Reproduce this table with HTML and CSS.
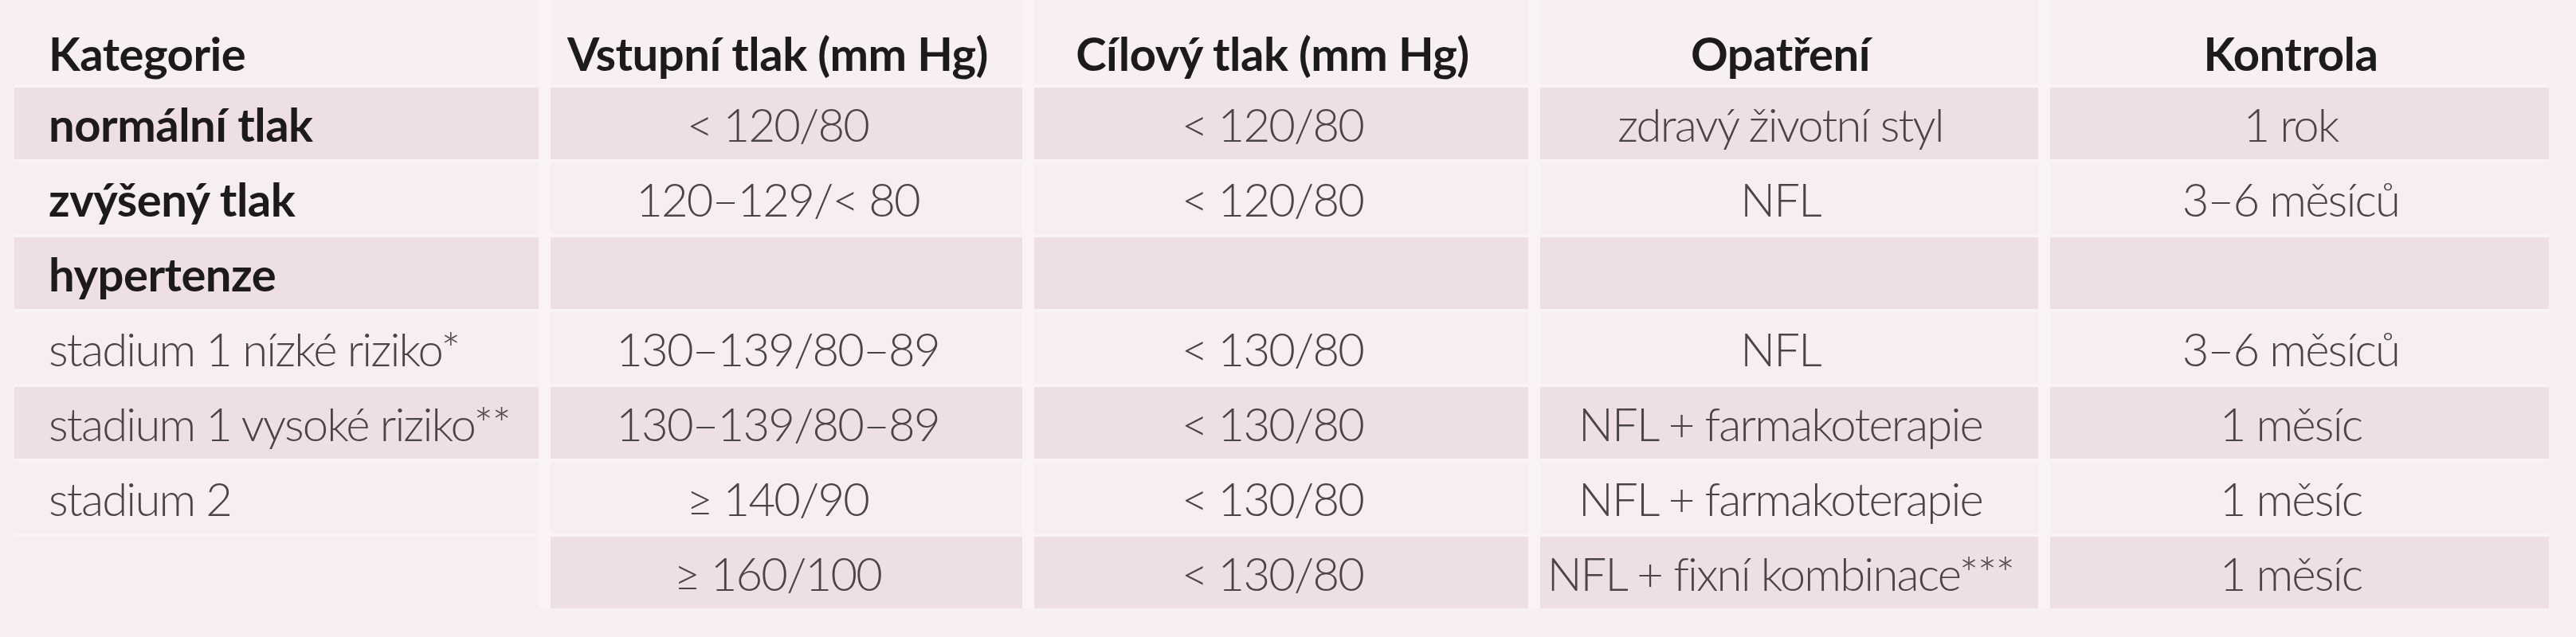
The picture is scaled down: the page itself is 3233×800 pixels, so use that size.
FILE: index.html
```html
<!DOCTYPE html>
<html lang="cs">
<head>
<meta charset="utf-8">
<title>Kategorie krevního tlaku</title>
<link rel="stylesheet" href="styles.css">
</head>
<body>
<div class="page">
  <div class="grid">
    <div class="cell head left">Kategorie</div>
    <div class="cell head">Vstupní tlak (mm Hg)</div>
    <div class="cell head">Cílový tlak (mm Hg)</div>
    <div class="cell head">Opatření</div>
    <div class="cell head">Kontrola</div>

    <div class="cell shade left strong">normální tlak</div>
    <div class="cell shade">&lt; 120/80</div>
    <div class="cell shade">&lt; 120/80</div>
    <div class="cell shade">zdravý životní styl</div>
    <div class="cell shade">1 rok</div>

    <div class="cell left strong">zvýšený tlak</div>
    <div class="cell">120–129/&lt; 80</div>
    <div class="cell">&lt; 120/80</div>
    <div class="cell">NFL</div>
    <div class="cell">3–6 měsíců</div>

    <div class="cell shade left strong">hypertenze</div>
    <div class="cell shade"></div>
    <div class="cell shade"></div>
    <div class="cell shade"></div>
    <div class="cell shade"></div>

    <div class="cell left">stadium 1 nízké riziko*</div>
    <div class="cell">130–139/80–89</div>
    <div class="cell">&lt; 130/80</div>
    <div class="cell">NFL</div>
    <div class="cell">3–6 měsíců</div>

    <div class="cell shade left">stadium 1 vysoké riziko**</div>
    <div class="cell shade">130–139/80–89</div>
    <div class="cell shade">&lt; 130/80</div>
    <div class="cell shade">NFL + farmakoterapie</div>
    <div class="cell shade">1 měsíc</div>

    <div class="cell left">stadium 2</div>
    <div class="cell">≥ 140/90</div>
    <div class="cell">&lt; 130/80</div>
    <div class="cell">NFL + farmakoterapie</div>
    <div class="cell">1 měsíc</div>

    <div class="cell left"></div>
    <div class="cell shade">≥ 160/100</div>
    <div class="cell shade">&lt; 130/80</div>
    <div class="cell shade">NFL + fixní kombinace***</div>
    <div class="cell shade">1 měsíc</div>
  </div>
</div>
</body>
</html>
```

FILE: styles.css
```css
html, body {
  margin: 0;
  padding: 0;
  background: #f7eff2;
}

.page {
  width: 3233px;
  height: 800px;
  padding-left: 18px;
  box-sizing: border-box;
  font-family: Lato, "Open Sans", "Liberation Sans", sans-serif;
}

.grid {
  display: inline-grid;
  grid-template-columns: 658px 592px 620px 625px 626px;
  grid-template-rows: 106px repeat(7, 90px);
  column-gap: 15px;
  row-gap: 4px;
  background: #f9f3f5;
}

.cell {
  display: flex;
  align-items: center;
  justify-content: center;
  padding-right: 22px;
  background: #f6eef1;
  font-size: 58px;
  font-weight: 300;
  letter-spacing: -1.8px;
  color: #4a4447;
  white-space: nowrap;
}

.cell.left {
  justify-content: flex-start;
  padding-left: 43px;
  padding-right: 0;
}

.cell.shade {
  background: #eedfe5;
}

.cell.head {
  align-items: flex-start;
  padding-top: 32px;
  box-sizing: border-box;
  background: #f7eff2;
  font-weight: 700;
  letter-spacing: -0.5px;
  color: #1d1a1c;
}

.cell.strong {
  font-weight: 700;
  letter-spacing: -0.5px;
  color: #1d1a1c;
}
```
